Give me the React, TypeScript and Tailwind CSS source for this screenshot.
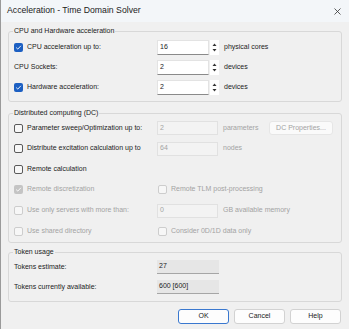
import React from "react";

const FONT = { fontFamily: '"Liberation Sans", Arial, sans-serif' };

function Check({ checked = false, disabled = false }: { checked?: boolean; disabled?: boolean }) {
  if (checked) {
    return (
      <div
        className={
          "w-[9px] h-[9px] rounded-[2px] flex items-center justify-center shrink-0 " +
          (disabled ? "bg-[#c4c4c4]" : "bg-[#1c5fc2]")
        }
      >
        <svg width="7" height="7" viewBox="0 0 7 7">
          <path d="M1.2 3.6 L2.8 5.1 L5.9 1.8" fill="none" stroke="#fff" strokeWidth="0.9" />
        </svg>
      </div>
    );
  }
  return (
    <div
      className={
        "w-[9px] h-[9px] rounded-[2px] border bg-[#f7f7f7] shrink-0 " +
        (disabled ? "border-[#cdcdcd]" : "border-[#5a5a5a]")
      }
    />
  );
}

function Spinner() {
  return (
    <div className="w-[9px] h-[15px] ml-[1px] bg-white flex flex-col items-center justify-center gap-[3px]">
      <svg width="5" height="3" viewBox="0 0 5 3">
        <path d="M0.5 3 L2.5 0.5 L4.5 3 Z" fill="#333" />
      </svg>
      <svg width="5" height="3" viewBox="0 0 5 3">
        <path d="M0.5 0 L4.5 0 L2.5 2.5 Z" fill="#333" />
      </svg>
    </div>
  );
}

function Group({ title, className = "", children }: { title: string; className?: string; children: React.ReactNode }) {
  return (
    <fieldset className={"border border-[#d8d8d8] rounded-[3px] pl-[5px] pr-[5px] " + className}>
      <legend className="-ml-[1px] px-[1px] leading-[10px] text-[7px] text-[#1b1b1b]">{title}</legend>
      {children}
    </fieldset>
  );
}

function SpinRow({ check, label, value, unit }: { check?: boolean; label: string; value: string; unit: string }) {
  return (
    <div className="h-[20px] flex items-center">
      <div className="w-[143px] flex items-center gap-[4px]">
        {check && <Check checked />}
        <span>{label}</span>
      </div>
      <div className="w-[52px] h-[15px] bg-white border border-[#e3e3e3] border-b-[#8a8a8a] flex items-center pl-[2px]">
        {value}
      </div>
      <Spinner />
      <span className="ml-[5px]">{unit}</span>
    </div>
  );
}

function DisabledInput({ value }: { value: string }) {
  return (
    <div className="w-[61px] h-[14px] bg-[#f3f3f3] border border-[#e1e1e1] flex items-center pl-[2px] text-[#a3a3a3]">
      {value}
    </div>
  );
}

function Btn({ label, primary = false }: { label: string; primary?: boolean }) {
  return (
    <div
      className={
        "w-[51px] h-[15px] rounded-[3px] bg-[#fdfdfd] border flex items-center justify-center text-[#1b1b1b] " +
        (primary ? "border-[#3a78cf]" : "border-[#d2d2d2]")
      }
    >
      {label}
    </div>
  );
}

export default function App() {
  return (
    <div
      className="w-[349px] h-[329px] bg-[#f0f0f0] border-l border-[#9a9a9a] text-[7px] text-[#1b1b1b] whitespace-nowrap overflow-hidden"
      style={FONT}
    >
      {/* title bar */}
      <div className="h-[22px] bg-[#f3f6f9] flex items-center justify-between pl-[6px] pr-[8px]">
        <span className="text-[8.7px]">Acceleration - Time Domain Solver</span>
        <svg width="7" height="7" viewBox="0 0 7 7">
          <path d="M0.5 0.5 L6.5 6.5 M6.5 0.5 L0.5 6.5" stroke="#333" strokeWidth="0.8" />
        </svg>
      </div>

      <div className="pl-[7px] pr-[7px]">
        <Group title="CPU and Hardware acceleration" className="mt-[4px] pt-[1px] pb-[4px]">
          <SpinRow check label="CPU acceleration up to:" value="16" unit="physical cores" />
          <SpinRow label="CPU Sockets:" value="2" unit="devices" />
          <SpinRow check label="Hardware acceleration:" value="2" unit="devices" />
        </Group>

        <Group title="Distributed computing (DC)" className="mt-[6px]">
          <div className="h-[20px] flex items-center">
            <div className="w-[143px] flex items-center gap-[4px]">
              <Check />
              <span>Parameter sweep/Optimization up to:</span>
            </div>
            <DisabledInput value="2" />
            <span className="ml-[5px] w-[46px] text-[#a3a3a3]">parameters</span>
            <div className="w-[64px] h-[14px] rounded-[3px] bg-[#fafafa] border border-[#e6e6e6] flex items-center justify-center text-[#a3a3a3]">
              DC Properties...
            </div>
          </div>
          <div className="h-[21px] flex items-center">
            <div className="w-[143px] flex items-center gap-[4px]">
              <Check />
              <span>Distribute excitation calculation up to</span>
            </div>
            <DisabledInput value="64" />
            <span className="ml-[5px] text-[#a3a3a3]">nodes</span>
          </div>
          <div className="h-[20px] flex items-center gap-[4px]">
            <Check />
            <span>Remote calculation</span>
          </div>
          <div className="h-[21px] flex items-center text-[#a3a3a3]">
            <div className="w-[144px] flex items-center gap-[4px]">
              <Check checked disabled />
              <span>Remote discretization</span>
            </div>
            <div className="flex items-center gap-[4px]">
              <Check disabled />
              <span>Remote TLM post-processing</span>
            </div>
          </div>
          <div className="h-[21px] flex items-center text-[#a3a3a3]">
            <div className="w-[143px] flex items-center gap-[4px]">
              <Check disabled />
              <span>Use only servers with more than:</span>
            </div>
            <DisabledInput value="0" />
            <span className="ml-[5px]">GB available memory</span>
          </div>
          <div className="h-[21px] flex items-center text-[#a3a3a3]">
            <div className="w-[144px] flex items-center gap-[4px]">
              <Check disabled />
              <span>Use shared directory</span>
            </div>
            <div className="flex items-center gap-[4px]">
              <Check disabled />
              <span>Consider 0D/1D data only</span>
            </div>
          </div>
        </Group>

        <Group title="Token usage" className="mt-[4px] pb-[4px]">
          <div className="h-[20px] flex items-center">
            <span className="w-[143px]">Tokens estimate:</span>
            <div className="w-[62px] h-[14px] bg-[#e6e6e6] border-b border-[#a6a6a6] flex items-center pl-[2px]">27</div>
          </div>
          <div className="h-[20px] flex items-center">
            <span className="w-[143px]">Tokens currently available:</span>
            <div className="w-[62px] h-[14px] bg-[#e6e6e6] border-b border-[#a6a6a6] flex items-center pl-[2px]">600 [600]</div>
          </div>
        </Group>

        <div className="mt-[7px] flex justify-end gap-[5px] pr-[1px]">
          <Btn label="OK" primary />
          <Btn label="Cancel" />
          <Btn label="Help" />
        </div>
      </div>
    </div>
  );
}
